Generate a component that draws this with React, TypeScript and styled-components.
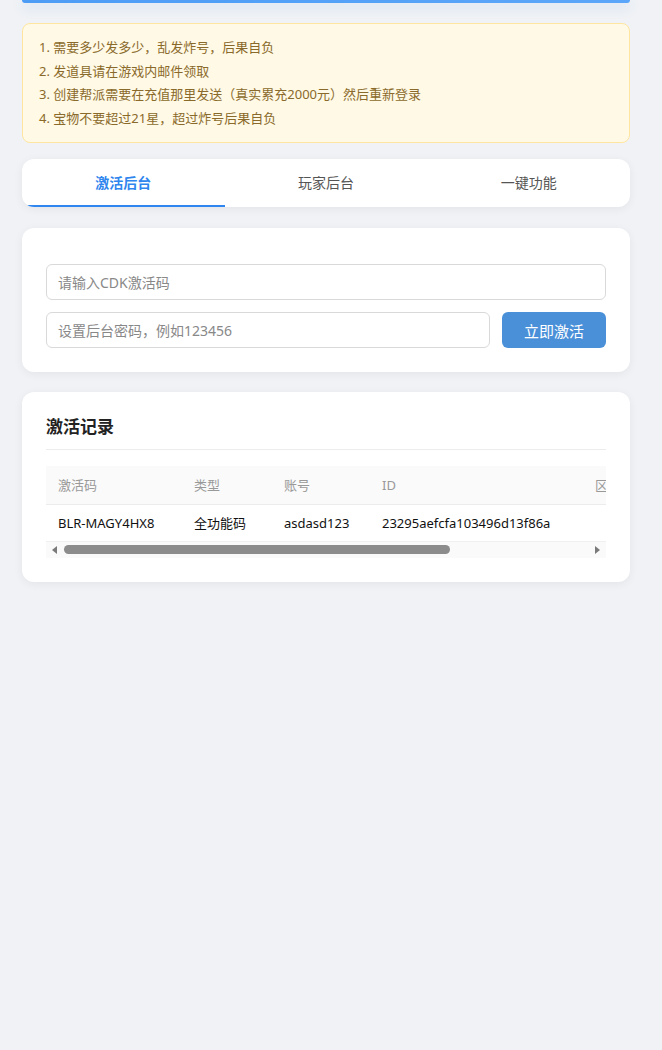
import styled, { createGlobalStyle } from "styled-components";

const GlobalStyle = createGlobalStyle`
  html, body {
    margin: 0;
    padding: 0;
    background: #f0f2f5;
  }
  body {
    font-family: "Noto Sans", "Noto Sans CJK SC", sans-serif;
    color: #333;
  }
  * {
    box-sizing: border-box;
  }
`;

const notices = [
  "1. 需要多少发多少，乱发炸号，后果自负",
  "2. 发道具请在游戏内邮件领取",
  "3. 创建帮派需要在充值那里发送（真实累充2000元）然后重新登录",
  "4. 宝物不要超过21星，超过炸号后果自负",
];

const tabs = ["激活后台", "玩家后台", "一键功能"];

const columns = [
  { title: "激活码", width: 136 },
  { title: "类型", width: 90 },
  { title: "账号", width: 98 },
  { title: "ID", width: 213 },
  { title: "区服", width: 64 },
  { title: "激活时间", width: 170 },
];

const records = [
  ["BLR-MAGY4HX8", "全功能码", "asdasd123", "23295aefcfa103496d13f86a", "", "2025-05-09 10:21"],
];

const App = () => {
  return (
    <>
      <GlobalStyle />
      <Page>
        <HeaderBar />
        <Notice>
          {notices.map((n) => (
            <NoticeLine key={n}>{n}</NoticeLine>
          ))}
        </Notice>
        <TabBar>
          {tabs.map((t, i) => (
            <Tab key={t} $active={i === 0}>
              {t}
            </Tab>
          ))}
        </TabBar>
        <Card>
          <FormBody>
            <FormRow>
              <Input placeholder="请输入CDK激活码" />
            </FormRow>
            <FormRow>
              <Input placeholder="设置后台密码，例如123456" />
              <PrimaryButton>立即激活</PrimaryButton>
            </FormRow>
          </FormBody>
        </Card>
        <Card>
          <CardTitle>激活记录</CardTitle>
          <TableScroll>
            <Table>
              <colgroup>
                {columns.map((c) => (
                  <col key={c.title} style={{ width: c.width }} />
                ))}
              </colgroup>
              <thead>
                <tr>
                  {columns.map((c) => (
                    <Th key={c.title}>{c.title}</Th>
                  ))}
                </tr>
              </thead>
              <tbody>
                {records.map((r) => (
                  <tr key={r[0]}>
                    {r.map((cell, i) => (
                      <Td key={i}>{cell}</Td>
                    ))}
                  </tr>
                ))}
              </tbody>
            </Table>
          </TableScroll>
          <ScrollTrack>
            <Arrow $dir="left" />
            <Thumb />
            <Arrow $dir="right" />
          </ScrollTrack>
        </Card>
      </Page>
    </>
  );
};

export default App;

const Page = styled.div`
  padding: 0 32px 40px 22px;
`;

const HeaderBar = styled.div`
  height: 3px;
  border-radius: 0 0 10px 10px;
  background: linear-gradient(90deg, #4c9cf6, #5aa6fa);
  box-shadow: 0 4px 12px rgba(64, 140, 240, 0.25);
  margin-bottom: 20px;
`;

const Notice = styled.div`
  background: #fff9e6;
  border: 1px solid #ffe6a0;
  border-radius: 8px;
  padding: 12px 16px;
  margin-bottom: 16px;
  color: #8a6a2a;
  font-size: 13px;
`;

const NoticeLine = styled.div`
  line-height: 23.5px;
`;

const TabBar = styled.div`
  display: flex;
  background: #fff;
  border-radius: 12px;
  box-shadow: 0 2px 10px rgba(0, 0, 0, 0.06);
  overflow: hidden;
  margin-bottom: 21px;
`;

const Tab = styled.div<{ $active: boolean }>`
  flex: 1;
  height: 48px;
  display: flex;
  align-items: center;
  justify-content: center;
  font-size: 14px;
  color: ${(p) => (p.$active ? "#2f86ee" : "#555")};
  font-weight: ${(p) => (p.$active ? 700 : 400)};
  border-bottom: 2px solid ${(p) => (p.$active ? "#2f86ee" : "transparent")};
`;

const Card = styled.div`
  background: #fff;
  border-radius: 12px;
  box-shadow: 0 2px 10px rgba(0, 0, 0, 0.06);
  padding: 24px;
  margin-bottom: 20px;
`;

const FormBody = styled.div`
  display: flex;
  flex-direction: column;
  gap: 12px;
  padding-top: 12px;
`;

const FormRow = styled.div`
  display: flex;
  gap: 12px;
`;

const Input = styled.input`
  flex: 1;
  min-width: 0;
  height: 36px;
  border: 1px solid #d9d9d9;
  border-radius: 6px;
  padding: 0 11px;
  font-size: 14px;
  font-family: inherit;
  color: #333;
  outline: none;
  &::placeholder {
    color: #888;
  }
`;

const PrimaryButton = styled.button`
  width: 104px;
  height: 36px;
  border: none;
  border-radius: 6px;
  background: #4a90d9;
  color: #fff;
  font-size: 15px;
  font-family: inherit;
`;

const CardTitle = styled.h3`
  margin: 0 0 16px;
  padding: 0 0 11px;
  line-height: 22px;
  font-size: 17px;
  font-weight: 700;
  color: #222;
  border-bottom: 1px solid #ececec;
`;

const TableScroll = styled.div`
  overflow: hidden;
`;

const Table = styled.table`
  border-collapse: collapse;
  table-layout: fixed;
  width: 771px;
  font-size: 13px;
  white-space: nowrap;
`;

const Th = styled.th`
  background: #fafafa;
  color: #999;
  font-weight: 400;
  text-align: left;
  height: 38px;
  padding: 0 12px;
  border-bottom: 1px solid #ececec;
`;

const Td = styled.td`
  color: #111;
  height: 37px;
  padding: 0 12px;
  border-bottom: 1px solid #f0f0f0;
`;

const ScrollTrack = styled.div`
  display: flex;
  align-items: center;
  height: 16px;
  padding: 0 6px;
  background: #fafafa;
`;

const Arrow = styled.div<{ $dir: "left" | "right" }>`
  width: 0;
  height: 0;
  border-top: 4px solid transparent;
  border-bottom: 4px solid transparent;
  ${(p) =>
    p.$dir === "left"
      ? "border-right: 5px solid #7a7a7a;"
      : "border-left: 5px solid #7a7a7a; margin-left: auto;"}
`;

const Thumb = styled.div`
  width: 386px;
  height: 9px;
  margin-left: 7px;
  border-radius: 5px;
  background: #8c8c8c;
`;
